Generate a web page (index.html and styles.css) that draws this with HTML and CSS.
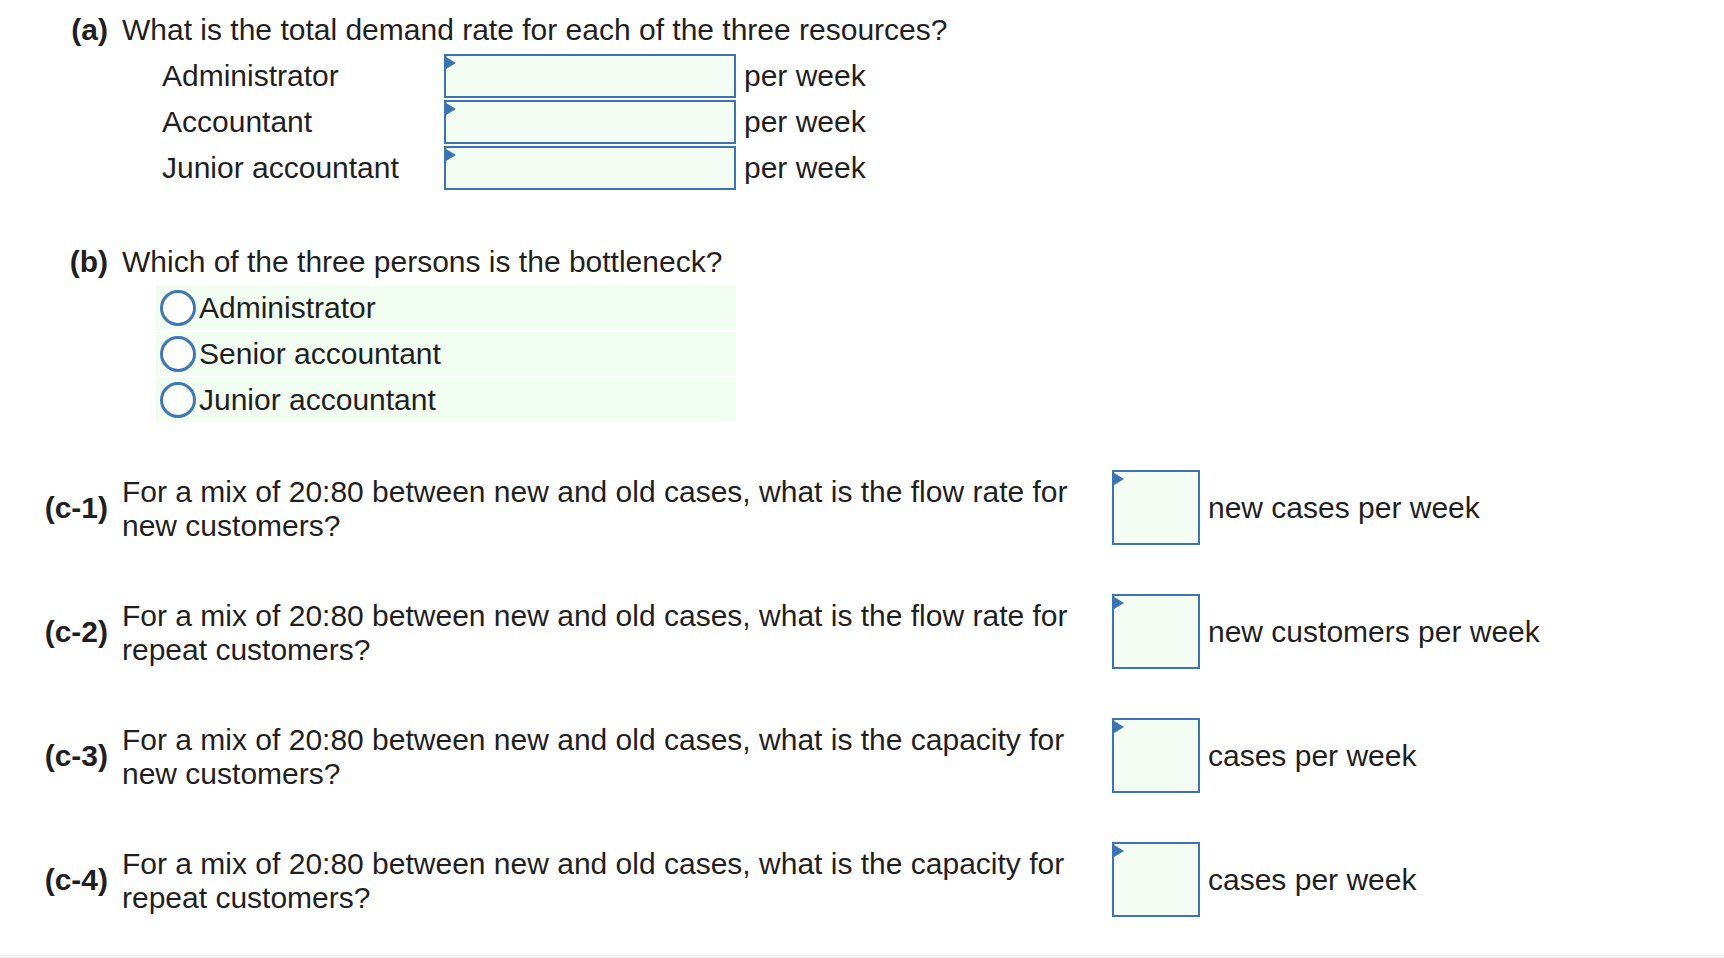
FILE: index.html
```html
<!DOCTYPE html>
<html lang="en">
<head>
<meta charset="utf-8">
<title>Bottleneck questions</title>
<link rel="stylesheet" href="styles.css">
</head>
<body>
<main class="page">
  <section class="q q-a">
    <div class="q-head"><span class="q-label">(a)</span><span class="q-text">What is the total demand rate for each of the three resources?</span></div>
    <div class="fill-rows">
      <div class="fill-row"><span class="fill-name">Administrator</span><span class="answer wide"></span><span class="unit">per week</span></div>
      <div class="fill-row"><span class="fill-name">Accountant</span><span class="answer wide"></span><span class="unit">per week</span></div>
      <div class="fill-row"><span class="fill-name">Junior accountant</span><span class="answer wide"></span><span class="unit">per week</span></div>
    </div>
  </section>

  <section class="q q-b">
    <div class="q-head"><span class="q-label">(b)</span><span class="q-text">Which of the three persons is the bottleneck?</span></div>
    <div class="options">
      <div class="option"><span class="radio"></span><span class="option-text">Administrator</span></div>
      <div class="option"><span class="radio"></span><span class="option-text">Senior accountant</span></div>
      <div class="option"><span class="radio"></span><span class="option-text">Junior accountant</span></div>
    </div>
  </section>

  <section class="q-c">
    <div class="c-row"><span class="q-label">(c-1)</span><span class="c-text">For a mix of 20:80 between new and old cases, what is the flow rate for new customers?</span><span class="answer small"></span><span class="unit c-unit">new cases per week</span></div>
    <div class="c-row"><span class="q-label">(c-2)</span><span class="c-text">For a mix of 20:80 between new and old cases, what is the flow rate for repeat customers?</span><span class="answer small"></span><span class="unit c-unit">new customers per week</span></div>
    <div class="c-row"><span class="q-label">(c-3)</span><span class="c-text">For a mix of 20:80 between new and old cases, what is the capacity for new customers?</span><span class="answer small"></span><span class="unit c-unit">cases per week</span></div>
    <div class="c-row"><span class="q-label">(c-4)</span><span class="c-text">For a mix of 20:80 between new and old cases, what is the capacity for repeat customers?</span><span class="answer small"></span><span class="unit c-unit">cases per week</span></div>
  </section>
</main>
</body>
</html>
```

FILE: styles.css
```css
html {
  background: #f2f2f2;
}

body {
  margin: 0;
  font-family: "Liberation Sans", Arial, Helvetica, sans-serif;
  font-size: 30px;
  color: #1f1f1f;
}

.page {
  background: #ffffff;
  height: 955px;
  padding-top: 13px;
  box-sizing: border-box;
  overflow: hidden;
}

.q-head {
  display: flex;
  line-height: 33px;
}

.q-label {
  width: 108px;
  flex: none;
  text-align: right;
  font-weight: bold;
}

.q-text {
  margin-left: 14px;
}

/* (a) fill-in rows */
.fill-rows {
  margin-top: 8px;
  margin-left: 162px;
  display: flex;
  flex-direction: column;
  gap: 2px;
}

.fill-row {
  display: flex;
  align-items: center;
  height: 44px;
  line-height: 44px;
}

.fill-name {
  width: 282px;
  flex: none;
}

.answer {
  position: relative;
  box-sizing: border-box;
  border: 2px solid #3b74b6;
  background: #f3fdf3;
  flex: none;
}

.answer::before {
  content: "";
  position: absolute;
  left: 0;
  top: 1px;
  width: 0;
  height: 0;
  border-top: 6px solid transparent;
  border-bottom: 6px solid transparent;
  border-left: 10px solid #3b74b6;
}

.answer.wide {
  width: 292px;
  height: 44px;
}

.unit {
  margin-left: 8px;
}

/* (b) radio options */
.q-b {
  margin-top: 55px;
}

.options {
  margin-top: 8px;
  margin-left: 156px;
  width: 580px;
  display: flex;
  flex-direction: column;
  gap: 2px;
}

.option {
  display: flex;
  align-items: center;
  height: 44px;
  background: #f2fdf2;
}

.radio {
  box-sizing: border-box;
  width: 36px;
  height: 36px;
  margin-left: 4px;
  border: 3.5px solid #3d77ba;
  border-radius: 50%;
  background: #ffffff;
  flex: none;
}

.option-text {
  margin-left: 3px;
}

/* (c) rows */
.q-c {
  margin-top: 48px;
  display: flex;
  flex-direction: column;
  gap: 49px;
}

.c-row {
  display: flex;
  align-items: center;
  line-height: 34px;
}

.c-text {
  width: 960px;
  flex: none;
  margin-left: 14px;
  padding-top: 2px;
}

.answer.small {
  width: 88px;
  height: 75px;
  margin-left: 30px;
}

.c-unit {
  margin-left: 8px;
}
```
